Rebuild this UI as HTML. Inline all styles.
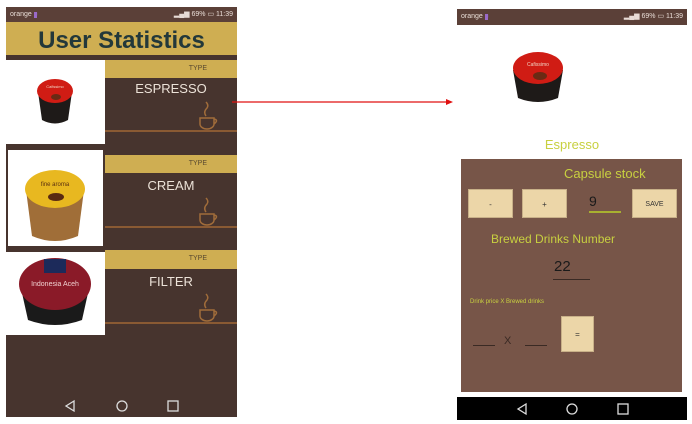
<!DOCTYPE html>
<html><head><style>
body{margin:0;width:692px;height:424px;background:#fff;position:relative;overflow:hidden;font-family:"Liberation Sans",sans-serif}
.a{position:absolute}
.sb{background:#5b4038;color:#e8dcd6;font-size:7px;line-height:15px}
.gold{background:#cfae52}
.dk{background:#47342e}
.type{font-size:7px;color:#5a4a30;text-align:right;padding-right:30px;line-height:18px;box-sizing:border-box}
.lbl{color:#ece2d8;font-size:13px;text-align:center}
.line{height:2px;background:#8a5a33}
.btn{background:#ecd6a8;border:1px solid #c8b088;font-size:8px;color:#333;text-align:center;box-sizing:border-box}
.nav{background:#000}
</style></head><body>
<div class="a dk" style="left:6px;top:7px;width:231px;height:410px"></div>
<div class="a sb" style="left:6px;top:7px;width:231px;height:15px"><span style="margin-left:4px">orange <span style="background:#9a6ac8;color:#9a6ac8;font-size:6px">■</span></span><span style="float:right;margin-right:4px">▂▄▆ 69% ▭ 11:39</span></div>
<div class="a gold" style="left:6px;top:22px;width:231px;height:33px;text-align:center;font-size:24px;font-weight:bold;color:#23383a;line-height:38px">User Statistics</div>
<div class="a" style="left:6px;top:60px;width:99px;height:84px;background:#fff"></div>
<div class="a gold type" style="left:105px;top:60px;width:132px;height:18px">TYPE</div>
<div class="a lbl" style="left:105px;top:81px;width:132px">ESPRESSO</div>
<div class="a line" style="left:105px;top:130px;width:132px"></div>
<div class="a" style="left:8px;top:150px;width:95px;height:96px;background:#fff"></div>
<div class="a gold type" style="left:105px;top:155px;width:132px;height:18px">TYPE</div>
<div class="a lbl" style="left:105px;top:178px;width:132px">CREAM</div>
<div class="a line" style="left:105px;top:226px;width:132px"></div>
<div class="a" style="left:6px;top:252px;width:99px;height:83px;background:#fff"></div>
<div class="a gold type" style="left:105px;top:250px;width:132px;height:19px">TYPE</div>
<div class="a lbl" style="left:105px;top:274px;width:132px">FILTER</div>
<div class="a line" style="left:105px;top:322px;width:132px"></div>
<svg class="a" style="left:0;top:0" width="692" height="424">
<g fill="none" stroke="#a06c3a" stroke-width="1.5">
<path d="M200 118 h14 v6 a7 5 0 0 1 -14 0z M214 119 q5 1 0 5 M206 116 q-3 -4 1 -8 q2 -3 -1 -6"/>
<path d="M200 214 h14 v6 a7 5 0 0 1 -14 0z M214 215 q5 1 0 5 M206 212 q-3 -4 1 -8 q2 -3 -1 -6"/>
<path d="M200 310 h14 v6 a7 5 0 0 1 -14 0z M214 311 q5 1 0 5 M206 308 q-3 -4 1 -8 q2 -3 -1 -6"/>
</g>
<path d="M38 92 L42 120 q13 7 26 0 L72 92z" fill="#1e1a18"/><ellipse cx="55" cy="91" rx="18" ry="12" fill="#d01c14"/><text x="55" y="88" font-size="4" fill="#f0d0c0" text-anchor="middle" font-family="Liberation Sans">Cafissimo</text><ellipse cx="56" cy="97" rx="5" ry="3" fill="#6a2a14"/>
<path d="M26 190 L32 236 q23 10 46 0 L84 190z" fill="#a06e38"/><ellipse cx="55" cy="189" rx="30" ry="19" fill="#e8b820"/><text x="55" y="186" font-size="6" fill="#5a3010" text-anchor="middle" font-family="Liberation Sans">fine aroma</text><ellipse cx="56" cy="197" rx="8" ry="4" fill="#5a2a12"/>
<path d="M20 284 L28 320 q27 10 54 0 L90 284z" fill="#1a1a1a"/><ellipse cx="55" cy="284" rx="36" ry="26" fill="#8a1a28"/><rect x="44" y="259" width="22" height="14" fill="#1c2a5a"/><text x="55" y="286" font-size="7" fill="#f0d0d0" text-anchor="middle" font-family="Liberation Sans">Indonesia Aceh</text>
<path d="M513 70 L518 98 q20 8 40 0 L563 70z" fill="#1e1a18"/><ellipse cx="538" cy="68" rx="25" ry="16" fill="#d01c14"/><text x="538" y="66" font-size="5" fill="#f0d0c0" text-anchor="middle" font-family="Liberation Sans">Cafissimo</text><ellipse cx="540" cy="76" rx="7" ry="4" fill="#6a2a14"/>
<line x1="232" y1="102" x2="446" y2="102" stroke="#e01010" stroke-width="1.2"/><path d="M446 99 L453 102 L446 105z" fill="#e01010"/>
<g fill="none" stroke="#ddd" stroke-width="1.3">
<path d="M74 401 l-8 5 l8 5z"/><circle cx="122" cy="406" r="5"/><rect x="168" y="401" width="10" height="10"/>
<path d="M526 404 l-8 5 l8 5z"/><circle cx="572" cy="409" r="5"/><rect x="618" y="404" width="10" height="10"/>
</g>
</svg>
<div class="a nav" style="left:6px;top:395px;width:231px;height:22px;z-index:-1"></div>
<div class="a sb" style="left:457px;top:9px;width:230px;height:16px"><span style="margin-left:4px">orange <span style="background:#9a6ac8;color:#9a6ac8;font-size:6px">■</span></span><span style="float:right;margin-right:4px">▂▄▆ 69% ▭ 11:39</span></div>
<div class="a" style="left:457px;top:137px;width:230px;text-align:center;color:#c8d040;font-size:13px">Espresso</div>
<div class="a" style="left:461px;top:159px;width:221px;height:233px;background:#775548"></div>
<div class="a" style="left:564px;top:166px;color:#c8d040;font-size:13px">Capsule stock</div>
<div class="a btn" style="left:468px;top:189px;width:45px;height:29px;line-height:29px">-</div>
<div class="a btn" style="left:522px;top:189px;width:45px;height:29px;line-height:29px">+</div>
<div class="a" style="left:589px;top:193px;font-size:14px;color:#1a1a1a">9</div>
<div class="a" style="left:589px;top:211px;width:32px;height:2px;background:#a8b030"></div>
<div class="a btn" style="left:632px;top:189px;width:45px;height:29px;line-height:29px;font-size:7px">SAVE</div>
<div class="a" style="left:491px;top:232px;color:#c8d040;font-size:12px">Brewed Drinks Number</div>
<div class="a" style="left:554px;top:258px;font-size:15px;color:#1a1a1a">22</div>
<div class="a" style="left:553px;top:279px;width:37px;height:1px;background:#3a2a24"></div>
<div class="a" style="left:470px;top:299px;color:#c8d040;font-size:6px">Drink price X Brewed drinks</div>
<div class="a" style="left:473px;top:345px;width:22px;height:1px;background:#3a2a24"></div>
<div class="a" style="left:504px;top:335px;font-size:11px;color:#3a2a24">X</div>
<div class="a" style="left:525px;top:345px;width:22px;height:1px;background:#3a2a24"></div>
<div class="a btn" style="left:561px;top:316px;width:33px;height:36px;line-height:36px">=</div>
<div class="a nav" style="left:457px;top:397px;width:230px;height:23px;z-index:-1"></div>
</body></html>
